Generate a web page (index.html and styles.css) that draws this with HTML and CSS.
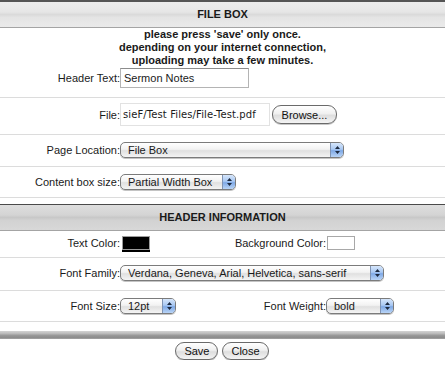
FILE: index.html
```html
<!DOCTYPE html>
<html lang="en">
<head>
  <meta charset="UTF-8" />
  <title>File Box</title>
  <link rel="stylesheet" href="styles.css">
</head>
<body>
  <div class="bar bar-top">FILE BOX</div>

  <section class="group">
    <p class="notice">please press 'save' only once.<br>depending on your internet connection,<br>uploading may take a few minutes.</p>

    <div class="row row-header">
      <label>Header Text:</label>
      <span class="textbox">Sermon Notes</span>
    </div>

    <div class="row row-file">
      <label>File:</label>
      <span class="filebox">sieF/Test Files/File-Test.pdf</span>
      <button class="pill browse">Browse...</button>
    </div>

    <div class="row row-popup">
      <label>Page Location:</label>
      <span class="popup w-location"><span class="val">File Box</span><span class="arrows"><svg width="7" height="10" viewBox="0 0 7 10"><path d="M3.5 1L6 4H1z M3.5 9L6 6H1z" fill="#1d2a40"/></svg></span></span>
    </div>

    <div class="row row-popup row-last">
      <label>Content box size:</label>
      <span class="popup w-size"><span class="val">Partial Width Box</span><span class="arrows"><svg width="7" height="10" viewBox="0 0 7 10"><path d="M3.5 1L6 4H1z M3.5 9L6 6H1z" fill="#1d2a40"/></svg></span></span>
    </div>
  </section>

  <div class="bar bar-mid">HEADER INFORMATION</div>

  <section class="group">
    <div class="row4 row-colors">
      <label>Text Color:</label>
      <span class="swatch swatch-black"></span>
      <label>Background Color:</label>
      <span class="swatch swatch-white"></span>
    </div>

    <div class="row4 row-family">
      <label>Font Family:</label>
      <span class="popup w-family"><span class="val">Verdana, Geneva, Arial, Helvetica, sans-serif</span><span class="arrows"><svg width="7" height="10" viewBox="0 0 7 10"><path d="M3.5 1L6 4H1z M3.5 9L6 6H1z" fill="#1d2a40"/></svg></span></span>
    </div>

    <div class="row4 row-font">
      <label>Font Size:</label>
      <span class="popup w-fsize"><span class="val">12pt</span><span class="arrows"><svg width="7" height="10" viewBox="0 0 7 10"><path d="M3.5 1L6 4H1z M3.5 9L6 6H1z" fill="#1d2a40"/></svg></span></span>
      <label>Font Weight:</label>
      <span class="popup w-weight"><span class="val">bold</span><span class="arrows"><svg width="7" height="10" viewBox="0 0 7 10"><path d="M3.5 1L6 4H1z M3.5 9L6 6H1z" fill="#1d2a40"/></svg></span></span>
    </div>
  </section>

  <div class="bar-bottom"></div>

  <div class="actions">
    <button class="pill">Save</button>
    <button class="pill">Close</button>
  </div>
</body>
</html>
```

FILE: styles.css
```css
body {
  margin: 0;
  font-family: 'Liberation Sans', Arial, sans-serif;
  font-size: 11px;
  color: #1a1a1a;
  background: #fff;
}

.bar {
  height: 25px;
  line-height: 25px;
  text-align: center;
  font-weight: bold;
  font-size: 11px;
  color: #1a1a1a;
  border-bottom: 1px solid #a4a4a4;
}

.bar-top {
  border-top: 2px solid #555;
  background: linear-gradient(#ececec, #e6e6e6 40%, #dadada 50%, #e4e4e4 62%, #eaeaea);
}

.bar-mid {
  margin-top: 6px;
  border-top: 1px solid #4a4a4a;
  background: linear-gradient(#dedede, #d4d4d4 40%, #c8c8c8 50%, #d2d2d2 62%, #d8d8d8);
}

.bar-bottom {
  margin-top: 9px;
  height: 8px;
  background: linear-gradient(#d4d4d4, #bdbdbd 30%, #9a9a9a 55%, #8c8c8c 80%, #a6a6a6);
}

.notice {
  margin: 0;
  height: 39px;
  line-height: 13px;
  text-align: center;
  font-weight: bold;
}

.row {
  display: grid;
  grid-template-columns: 120px 1fr;
  align-items: center;
  border-bottom: 1px solid #dcdcdc;
}

.row-file {
  grid-template-columns: 120px auto 1fr;
}

.row4 {
  display: grid;
  grid-template-columns: 120px 106px 100px 1fr;
  align-items: center;
  border-bottom: 1px solid #dcdcdc;
}

.row label, .row4 label {
  text-align: right;
  white-space: nowrap;
}

.row-header { padding: 1px 0 9px; }
.row-file { padding: 5px 0 8px; }
.row-popup { padding: 7px 0 8px; }
.row-last { padding-bottom: 7px; }
.row-colors { padding: 5px 0 7px; }
.row-family { padding: 7px 0 9px; }
.row-font { padding: 7px 0 7px; }

.row-family .popup { grid-column: 2 / 5; }

.textbox {
  justify-self: start;
  width: 124px;
  height: 18px;
  line-height: 18px;
  padding-left: 3px;
  border: 1px solid #b4b4b4;
  border-top-color: #8c8c8c;
}

.filebox {
  width: 146px;
  height: 21px;
  line-height: 21px;
  padding-left: 2px;
  overflow: hidden;
  white-space: nowrap;
  border: 1px solid #e2e2e2;
  font-family: 'DejaVu Sans', sans-serif;
  font-size: 10px;
  letter-spacing: 0.1px;
}

.pill {
  font-family: 'Liberation Sans', Arial, sans-serif;
  font-size: 11px;
  color: #111;
  height: 18px;
  padding: 0 8px;
  border: 1px solid #6a6a6a;
  border-radius: 9px;
  background: linear-gradient(#ffffff, #f0f0f0 45%, #dedede 55%, #f4f4f4);
  box-shadow: 0 1px 0 #c8c8c8;
  cursor: pointer;
}

.browse {
  justify-self: start;
  margin-left: 2px;
  width: 65px;
  height: 19px;
}

.popup {
  display: flex;
  justify-self: start;
  height: 14px;
  border: 1px solid #7b7b7b;
  border-radius: 5px;
  overflow: hidden;
  background: linear-gradient(#ffffff, #f2f2f2 45%, #e0e0e0 55%, #f4f4f4);
  box-shadow: 0 1px 0 #c4c4c4;
}

.popup .val {
  flex: 1;
  line-height: 14px;
  padding-left: 7px;
  white-space: nowrap;
}

.popup .arrows {
  width: 12px;
  display: flex;
  align-items: center;
  justify-content: center;
  border-left: 1px solid #7f93b3;
  background: linear-gradient(#d6e6fb, #a9c8f2 45%, #7fa9e6 55%, #b9d4f6);
}

.w-location { width: 222px; }
.w-size { width: 114px; }
.w-family { width: 262px; }
.w-fsize { width: 54px; }
.w-weight { width: 66px; }

.swatch {
  justify-self: start;
  width: 26px;
  height: 12px;
  margin-left: 2px;
  border: 1px solid #9c9c9c;
}

.swatch-black {
  background: #000;
  box-shadow: 0 2px 0 #000;
}

.swatch-white {
  background: #fff;
  margin-left: 1px;
  border-color: #a8a8a8;
}

.actions {
  display: flex;
  justify-content: center;
  gap: 4px;
  padding-top: 3px;
  padding-right: 1px;
}
```
